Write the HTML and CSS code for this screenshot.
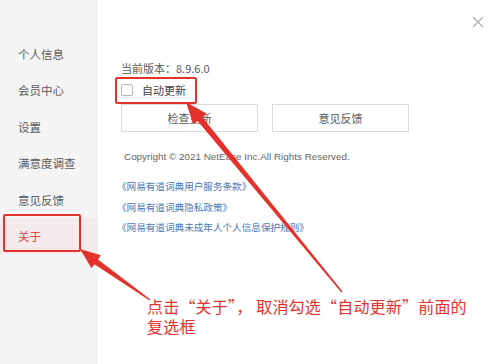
FILE: index.html
```html
<!DOCTYPE html>
<html lang="zh">
<head>
<meta charset="utf-8">
<link rel="stylesheet" href="styles.css">
</head>
<body>
<div class="window">
  <nav class="sidebar">
    <div class="nav-item">个人信息</div>
    <div class="nav-item">会员中心</div>
    <div class="nav-item">设置</div>
    <div class="nav-item">满意度调查</div>
    <div class="nav-item">意见反馈</div>
    <div class="nav-item active">关于</div>
  </nav>
  <main class="content">
    <div class="version">当前版本：8.9.6.0</div>
    <label class="auto-update"><span class="checkbox"></span><span>自动更新</span></label>
    <div class="buttons">
      <button class="btn">检查更新</button>
      <button class="btn">意见反馈</button>
    </div>
    <div class="copyright">Copyright © 2021 NetEase Inc.All Rights Reserved.</div>
    <div class="links">
      <a class="link">《网易有道词典用户服务条款》</a>
      <a class="link">《网易有道词典隐私政策》</a>
      <a class="link">《网易有道词典未成年人个人信息保护规则》</a>
    </div>
  </main>
  <div class="close">
    <svg width="12" height="12" viewBox="0 0 12 12"><path d="M1 1L11 11M11 1L1 11" stroke="#b0b0b0" stroke-width="1.2" fill="none"/></svg>
  </div>
  <div class="hl hl-check"></div>
  <div class="hl hl-about"></div>
  <svg class="arrows" width="500" height="364" viewBox="0 0 500 364">
    <polygon fill="#e5312b" points="186,102 193.3,124.5 197.6,121 341.4,292.4 342.6,291.6 202.2,117 206.5,113.5"/>
    <polygon fill="#e5312b" points="80,249 91.5,268.3 94.4,264.2 149.6,300.5 150.4,299.5 98,259.4 100.9,255.3"/>
  </svg>
  <div class="note">
    <div class="note-line">点击“关于”， 取消勾选“自动更新”前面的</div>
    <div class="note-line">复选框</div>
  </div>
</div>
</body>
</html>
```
FILE: styles.css
```css
html, body {
  margin: 0;
  padding: 0;
  background: #fff;
}
.window {
  position: relative;
  width: 500px;
  height: 364px;
  display: flex;
  font-family: "Noto Sans CJK SC", "Liberation Sans", sans-serif;
  overflow: hidden;
}
.sidebar {
  width: 98px;
  background: #f4f4f4;
  padding-top: 36px;
  display: flex;
  flex-direction: column;
}
.nav-item {
  height: 36.4px;
  line-height: 36px;
  padding-left: 18px;
  font-size: 11.5px;
  color: #5a5a5a;
}
.nav-item.active {
  background: #f3ebeb;
  color: #e0463c;
}
.content {
  flex: 1;
  padding-left: 23px;
  padding-top: 59px;
  display: flex;
  flex-direction: column;
}
.version {
  font-size: 11px;
  color: #5a5a5a;
  line-height: 18px;
}
.auto-update {
  display: flex;
  align-items: center;
  height: 22px;
  margin-top: 2px;
  font-size: 11px;
  color: #444;
}
.checkbox {
  width: 10px;
  height: 10px;
  border: 1px solid #b5b5b5;
  border-radius: 2px;
  margin-right: 9px;
  background: #fff;
}
.buttons {
  display: flex;
  gap: 14px;
  margin-top: 3px;
}
.btn {
  width: 137px;
  height: 28px;
  border: 1px solid #dadada;
  background: #fff;
  font-family: inherit;
  font-size: 11px;
  color: #555;
  padding: 0;
}
.copyright {
  margin-top: 17px;
  padding-left: 3px;
  font-family: "Liberation Sans", sans-serif;
  font-size: 9.9px;
  color: #666;
  line-height: 16px;
}
.links {
  display: flex;
  flex-direction: column;
  margin-top: 11px;
  margin-left: -4px;
}
.link {
  font-size: 9.6px;
  color: #4a78b8;
  line-height: 20.5px;
}
.close {
  position: absolute;
  left: 472px;
  top: 9px;
}
.hl {
  position: absolute;
  border: 2px solid #e5312b;
  border-radius: 2px;
  box-sizing: border-box;
}
.hl-check {
  left: 115px;
  top: 77px;
  width: 82px;
  height: 27px;
}
.hl-about {
  left: 3px;
  top: 214px;
  width: 78px;
  height: 38px;
}
.arrows {
  position: absolute;
  left: 0;
  top: 0;
}
.note {
  position: absolute;
  left: 147px;
  top: 296px;
  font-size: 16px;
  color: #e5312b;
  letter-spacing: 0.2px;
}
.note-line {
  height: 20px;
  line-height: 20px;
}
```
